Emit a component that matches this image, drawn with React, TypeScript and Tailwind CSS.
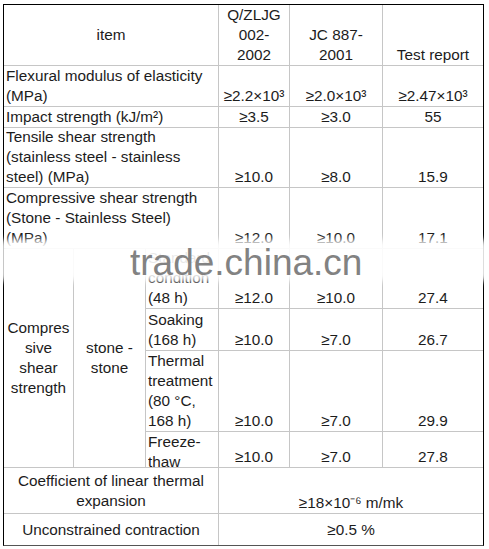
import React from "react";

type CellProps = {
  children?: React.ReactNode;
  span?: string;
  align?: "left" | "center";
  v?: "top" | "center" | "bottom";
  lastCol?: boolean;
  lastRow?: boolean;
};

function Cell({ children, span = "", align = "center", v = "bottom", lastCol, lastRow }: CellProps) {
  const vClass = v === "top" ? "justify-start" : v === "center" ? "justify-center" : "justify-end";
  return (
    <div
      className={`${span} flex flex-col ${vClass} overflow-hidden border-[#c6c6c6] ${
        lastCol ? "" : "border-r"
      } ${lastRow ? "" : "border-b"} ${align === "left" ? "text-left pl-[2px]" : "text-center"}`}
    >
      {children}
    </div>
  );
}

export default function App() {
  return (
    <div className="relative min-h-[549px] w-[489px] bg-white pt-[4px] pl-[3px] text-[15.3px] leading-[20px] text-[#1c1c1c] [font-family:'Liberation_Sans',Arial,sans-serif]">
      {/* Spec table */}
      <div className="grid w-[481px] grid-cols-[70px_72px_73px_71px_93px_100px] grid-rows-[61px_41px_21px_60px_61px_60px_42px_81px_36px_46px_31px] border border-black border-b-[#555]">
        {/* header */}
        <Cell span="col-span-3" v="center">item</Cell>
        <Cell v="top">
          Q/ZLJG
          <br />
          002-
          <br />
          2002
        </Cell>
        <Cell>
          JC 887-
          <br />
          2001
        </Cell>
        <Cell lastCol>Test report</Cell>

        <Cell span="col-span-3" align="left">
          Flexural modulus of elasticity
          <br />
          (MPa)
        </Cell>
        <Cell>≥2.2×10³</Cell>
        <Cell>≥2.0×10³</Cell>
        <Cell lastCol>≥2.47×10³</Cell>

        <Cell span="col-span-3" align="left">Impact strength (kJ/m²)</Cell>
        <Cell>≥3.5</Cell>
        <Cell>≥3.0</Cell>
        <Cell lastCol>55</Cell>

        <Cell span="col-span-3" align="left">
          Tensile shear strength
          <br />
          (stainless steel - stainless
          <br />
          steel) (MPa)
        </Cell>
        <Cell>≥10.0</Cell>
        <Cell>≥8.0</Cell>
        <Cell lastCol>15.9</Cell>

        <Cell span="col-span-3" align="left">
          Compressive shear strength
          <br />
          (Stone - Stainless Steel)
          <br />
          (MPa)
        </Cell>
        <Cell>≥12.0</Cell>
        <Cell>≥10.0</Cell>
        <Cell lastCol>17.1</Cell>

        {/* stone - stone block */}
        <Cell span="row-span-4" v="center">
          Compres
          <br />
          sive
          <br />
          shear
          <br />
          strength
        </Cell>
        <Cell span="row-span-4" v="center">
          stone -
          <br />
          stone
        </Cell>
        <Cell align="left">
          Standard
          <br />
          condition
          <br />
          (48 h)
        </Cell>
        <Cell>≥12.0</Cell>
        <Cell>≥10.0</Cell>
        <Cell lastCol>27.4</Cell>

        <Cell align="left">
          Soaking
          <br />
          (168 h)
        </Cell>
        <Cell>≥10.0</Cell>
        <Cell>≥7.0</Cell>
        <Cell lastCol>26.7</Cell>

        <Cell align="left">
          Thermal
          <br />
          treatment
          <br />
          (80 °C,
          <br />
          168 h)
        </Cell>
        <Cell>≥10.0</Cell>
        <Cell>≥7.0</Cell>
        <Cell lastCol>29.9</Cell>

        <Cell align="left" v="top">
          <div className="h-[35px] overflow-hidden">
            Freeze-
            <br />
            thaw
          </div>
        </Cell>
        <Cell>≥10.0</Cell>
        <Cell>≥7.0</Cell>
        <Cell lastCol>27.8</Cell>

        <Cell span="col-span-3" v="center">
          Coefficient of linear thermal
          <br />
          expansion
        </Cell>
        <Cell span="col-span-3" lastCol>
          ≥18×10⁻⁶ m/mk
        </Cell>

        <Cell span="col-span-3" v="center" lastRow>
          Unconstrained contraction
        </Cell>
        <Cell span="col-span-3" v="center" lastCol lastRow>
          ≥0.5 %
        </Cell>
      </div>

      {/* watermark */}
      <div className="pointer-events-none absolute left-0 right-0 top-[240px] h-[41px] bg-white/90 blur-[3px]" />
      <div className="pointer-events-none absolute left-[130px] top-[244px] text-[37px] leading-none text-[#828282]">
        trade.china.cn
      </div>
    </div>
  );
}
